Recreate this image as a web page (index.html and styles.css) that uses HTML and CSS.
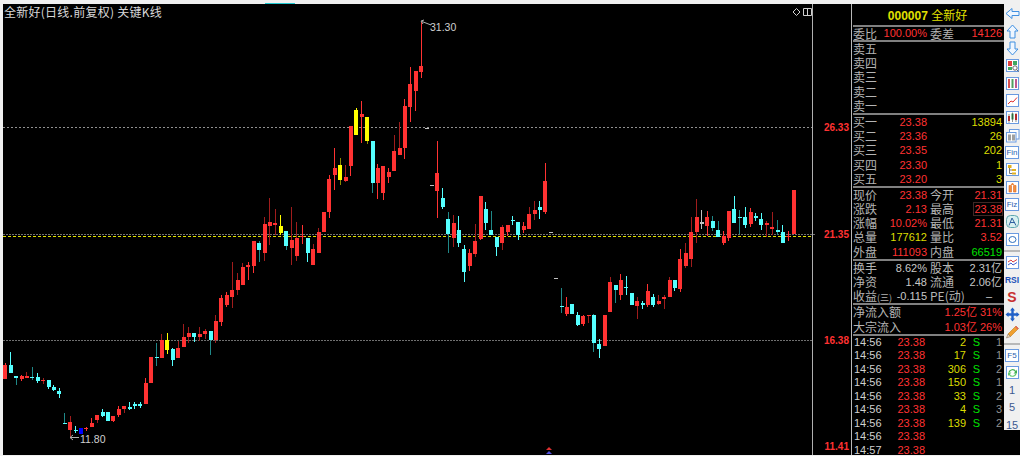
FILE: index.html
```html
<!DOCTYPE html>
<html lang="zh-CN">
<head>
    <meta charset="UTF-8">
    <title>全新好 关键K线</title>
    <link rel="stylesheet" href="styles.css">
</head>
<body>
    <div class="top-strip"><span class="top-tab"></span></div>
    <div class="app">
        <!-- K线图 -->
        <div class="chart">
            <div class="chart-title">全新好(日线.前复权) 关键K线</div>
            <svg class="chart-svg" viewBox="3 4 848 451" width="848" height="451">
                <line class="axis" x1="812.5" y1="4" x2="812.5" y2="455"/>
                <line class="grid-dot" x1="3" y1="127.5" x2="812" y2="127.5"/>
                <line class="grid-dim" x1="3" y1="234.5" x2="816" y2="234.5"/>
                <line class="grid-close" x1="3" y1="236.5" x2="812" y2="236.5"/>
                <line class="grid-dim" x1="3" y1="340.5" x2="812" y2="340.5"/>
                <g id="candles"></g>
                <text class="axis-label" x="849" y="131">26.33</text>
                <text class="axis-label" x="849" y="238">21.35</text>
                <text class="axis-label" x="849" y="344">16.38</text>
                <text class="axis-label" x="849" y="450">11.41</text>
                <path class="pointer" d="M431 25 L422 21.5 M424 20 L421 21 L423 24"/>
                <text class="peak" x="430" y="31">31.30</text>
                <path class="pointer" d="M79 437.5 H70 M73 435 L70 437.5 L73 440"/>
                <text class="peak" x="80" y="443">11.80</text>
                <path class="mark-red" d="M549 447 L552 450 H546 Z"/>
                <path class="mark-blue" d="M549 451 L552 454 H546 Z"/>
                <path class="corner-icon" d="M796.5 8.5 L800 12 L796.5 15.5 L793 12 Z"/>
                <path class="corner-icon" d="M803.5 8.5 H811.5 V15.5 H803.5 Z M807.5 8.5 V15.5"/>
            </svg>
        </div>

        <!-- 盘口 -->
        <div class="quote">
            <div class="quote-head"><b>000007</b> 全新好</div>
            <div class="section row-four ratio-row">
                <span class="lbl">委比</span><span class="num red">100.00%</span>
                <span class="lbl lbl-2">委差</span><span class="num red">14126</span>
            </div>
            <div class="section">
                <div class="row"><span class="lbl">卖五</span></div>
                <div class="row"><span class="lbl">卖四</span></div>
                <div class="row"><span class="lbl">卖三</span></div>
                <div class="row"><span class="lbl">卖二</span></div>
                <div class="row"><span class="lbl">卖一</span></div>
            </div>
            <div class="section">
                <div class="row row-book"><span class="lbl">买一</span><span class="num red">23.38</span><span class="num yellow">13894</span></div>
                <div class="row row-book"><span class="lbl">买二</span><span class="num red">23.36</span><span class="num yellow">26</span></div>
                <div class="row row-book"><span class="lbl">买三</span><span class="num red">23.35</span><span class="num yellow">202</span></div>
                <div class="row row-book"><span class="lbl">买四</span><span class="num red">23.30</span><span class="num yellow">1</span></div>
                <div class="row row-book"><span class="lbl">买五</span><span class="num red">23.20</span><span class="num yellow">3</span></div>
            </div>
            <div class="section">
                <div class="row row-four"><span class="lbl">现价</span><span class="num red">23.38</span><span class="lbl lbl-2">今开</span><span class="num red">21.31</span></div>
                <div class="row row-four"><span class="lbl">涨跌</span><span class="num red">2.13</span><span class="lbl lbl-2">最高</span><span class="num red"><span class="boxed">23.38</span></span></div>
                <div class="row row-four"><span class="lbl">涨幅</span><span class="num red">10.02%</span><span class="lbl lbl-2">最低</span><span class="num red">21.31</span></div>
                <div class="row row-four"><span class="lbl">总量</span><span class="num yellow">177612</span><span class="lbl lbl-2">量比</span><span class="num red">3.52</span></div>
                <div class="row row-four"><span class="lbl">外盘</span><span class="num red">111093</span><span class="lbl lbl-2">内盘</span><span class="num green">66519</span></div>
            </div>
            <div class="section">
                <div class="row row-four"><span class="lbl">换手</span><span class="num">8.62%</span><span class="lbl lbl-2">股本</span><span class="num">2.31亿</span></div>
                <div class="row row-four"><span class="lbl">净资</span><span class="num">1.48</span><span class="lbl lbl-2">流通</span><span class="num">2.06亿</span></div>
                <div class="row row-four"><span class="lbl">收益<small>(三)</small></span><span class="num">-0.115</span><span class="lbl lbl-2">PE(动)</span><span class="num dash">–</span></div>
            </div>
            <div class="section">
                <div class="row row-flow"><span class="lbl">净流入额</span><span class="num red">1.25亿</span><span class="num red">31%</span></div>
                <div class="row row-flow"><span class="lbl">大宗流入</span><span class="num red">1.03亿</span><span class="num red">26%</span></div>
            </div>
            <div class="ticks">
                <div class="tick"><span>14:56</span><span class="num red">23.38</span><span class="num yellow">2</span><span class="side">S</span><span class="num count">1</span></div>
                <div class="tick"><span>14:56</span><span class="num red">23.38</span><span class="num yellow">17</span><span class="side">S</span><span class="num count">1</span></div>
                <div class="tick"><span>14:56</span><span class="num red">23.38</span><span class="num yellow">306</span><span class="side">S</span><span class="num count">2</span></div>
                <div class="tick"><span>14:56</span><span class="num red">23.38</span><span class="num yellow">150</span><span class="side">S</span><span class="num count">1</span></div>
                <div class="tick"><span>14:56</span><span class="num red">23.38</span><span class="num yellow">33</span><span class="side">S</span><span class="num count">2</span></div>
                <div class="tick"><span>14:56</span><span class="num red">23.38</span><span class="num yellow">4</span><span class="side">S</span><span class="num count">3</span></div>
                <div class="tick"><span>14:56</span><span class="num red">23.38</span><span class="num yellow">139</span><span class="side">S</span><span class="num count">2</span></div>
                <div class="tick"><span>14:56</span><span class="num red">23.38</span></div>
                <div class="tick"><span>14:57</span><span class="num red">23.38</span></div>
            </div>
        </div>

        <!-- 工具栏 -->
        <div class="toolbar-wrap">
            <div class="toolbar">
                <div class="tool"><svg viewBox="0 0 15 15"><path class="arrow" d="M1 7.5 L7 2.5 V5.5 H14 V9.5 H7 V12.5 Z"/></svg></div>
                <div class="tool"><svg viewBox="0 0 15 15"><path class="arrow" d="M7.5 1 L13 7 H10 V14 H5 V7 H2 Z"/></svg></div>
                <div class="tool"><svg viewBox="0 0 15 15"><path class="arrow" d="M7.5 14 L13 8 H10 V1 H5 V8 H2 Z"/></svg></div>
                <div class="tool"><svg viewBox="0 0 15 15"><rect class="frame" x="1.5" y="1.5" width="12" height="12"/><rect x="3" y="3" width="4" height="5" fill="#e04040"/><rect x="8" y="3" width="4" height="4" fill="#40a860"/><rect x="3" y="9" width="4" height="3" fill="#40a860"/><circle cx="10" cy="10" r="2.2" fill="#fff" stroke="#666"/><path d="M11.5 11.5 L13.5 13.5" stroke="#666"/></svg></div>
                <div class="tool"><svg viewBox="0 0 15 15"><rect class="frame" x="1.5" y="1.5" width="12" height="12"/><rect x="3" y="3" width="2" height="9" fill="#d85050"/><rect x="6.5" y="3" width="2" height="9" fill="#50a060"/><rect x="10" y="3" width="2" height="9" fill="#c05890"/></svg></div>
                <div class="tool"><svg viewBox="0 0 15 15"><rect class="frame" x="1.5" y="1.5" width="12" height="12"/><path d="M3 11 L6 8 L8 9 L12 4.5" fill="none" stroke="#e03030"/></svg></div>
                <div class="tool"><svg viewBox="0 0 15 15"><rect class="frame" x="1.5" y="1.5" width="12" height="12"/><rect x="3" y="6" width="2" height="5" fill="#e02020"/><rect x="6.5" y="3.5" width="2" height="6" fill="#209040"/><rect x="10" y="4" width="2" height="6" fill="#e02020"/><path d="M4 4 V13 M7.5 2.5 V12 M11 3 V12" stroke="#444" stroke-width=".6"/></svg></div>
                <div class="tool"><svg viewBox="0 0 15 15"><rect class="frame" x="4.5" y="1.5" width="9.5" height="9.5"/><rect class="frame" x="1.5" y="4.5" width="9.5" height="9.5"/><rect x="3" y="6.5" width="3" height="6" fill="#a0a0a0"/><rect x="7" y="6.5" width="3" height="6" fill="#a0a0a0"/></svg></div>
                <div class="tool"><span class="tool-box">Fin</span></div>
                <div class="tool"><svg viewBox="0 0 15 15"><rect class="frame" x="1.5" y="1.5" width="12" height="12"/><rect x="3" y="3" width="3.5" height="3" fill="#e0b020"/><rect x="7" y="7" width="4" height="2" fill="#e0b020"/><rect x="7" y="10.5" width="4" height="2" fill="#e0b020"/><path d="M4.5 6 V11.5 H7 M4.5 8 H7" fill="none" stroke="#777"/></svg></div>
                <div class="tool"><svg viewBox="0 0 15 15"><rect class="frame" x="1.5" y="1.5" width="12" height="12"/><path d="M4 12 V5.5 H6.5 V12 Z M8.5 12 V5.5 H11 V12 Z M6 5 L7.5 3 L9 5" fill="#f09040" stroke="#e06820" stroke-width=".6"/></svg></div>
                <div class="tool"><span class="tool-box">Fiz</span></div>
                <div class="tool"><svg viewBox="0 0 15 15"><rect x="1.5" y="1.5" width="12" height="12" rx="4" fill="#d8f0f0" stroke="#60a8b0"/><path d="M4 11.5 L7 4 L11 11.5 M5 8.5 H10" fill="none" stroke="#3060a0"/></svg></div>
                <div class="tool"><svg viewBox="0 0 15 15"><rect class="frame" x="1.5" y="1.5" width="12" height="12"/><ellipse cx="7.5" cy="7.5" rx="3.5" ry="3" fill="none" stroke="#3070c0"/></svg></div>
                <div class="tool-sep"></div>
                <div class="tool"><svg viewBox="0 0 15 15"><rect class="frame" x="1.5" y="1.5" width="12" height="12"/><path d="M3 7 L6 5 L8 7 L12 4.5" fill="none" stroke="#d84040"/><path d="M3 10 L6 8 L8 10 L12 7.5" fill="none" stroke="#4060d0"/></svg></div>
                <div class="tool"><span class="tool-rsi">RSI</span></div>
                <div class="tool"><span class="tool-dollar">S</span></div>
                <div class="tool"><svg viewBox="0 0 15 15"><path d="M7.5 0.5 L10 3.5 H8.7 V6.3 H11.5 V5 L14.5 7.5 L11.5 10 V8.7 H8.7 V11.5 H10 L7.5 14.5 L5 11.5 H6.3 V8.7 H3.5 V10 L0.5 7.5 L3.5 5 V6.3 H6.3 V3.5 H5 Z" fill="#1f5fc8"/></svg></div>
                <div class="tool"><svg viewBox="0 0 15 15"><path d="M3 10 L11 2 L13.5 4.5 L5.5 12.5 Z" fill="#f0a030" stroke="#c07818" stroke-width=".6"/><path d="M3 10 L1.5 14 L5.5 12.5 Z" fill="#f0d8b0" stroke="#887060" stroke-width=".6"/><path d="M11 2 L13.5 4.5 L12.5 5.5 L10 3 Z" fill="#e06060"/></svg></div>
                <div class="tool-sep"></div>
                <div class="tool"><span class="tool-box">F5</span></div>
                <div class="tool"><svg viewBox="0 0 15 15"><rect class="frame" x="1.5" y="1.5" width="12" height="12"/><path d="M3.5 7 A4 3.5 0 0 1 11 6 L12 4.5 V8.5 H8.5 L10 7 A2.5 2 0 0 0 5 7.5 Z" fill="#40b050"/><path d="M11.5 8.5 A4 3.5 0 0 1 4 10 L3 11 V7.5 H6.5 L5 9 A2.5 2 0 0 0 10 8.5 Z" fill="#60c870"/></svg></div>
                <div class="tool tool-num">1</div>
                <div class="tool tool-num">5</div>
                <div class="tool tool-num">15</div>
            </div>
        </div>
    </div>
    <script src="chart.js"></script>
</body>
</html>
```

FILE: styles.css
```css
* {
    margin: 0;
    padding: 0;
    box-sizing: border-box;
}

body {
    width: 1020px;
    height: 456px;
    overflow: hidden;
    background: #f0f0f0;
    color: #c4c4c4;
    font-family: "Liberation Sans", "Noto Sans CJK SC", sans-serif;
    font-size: 11px;
}

.top-strip {
    height: 4px;
    position: relative;
}

.top-tab {
    position: absolute;
    left: 265px;
    top: 3px;
    width: 30px;
    height: 1px;
    background: #20c8d0;
}

.app {
    display: flex;
    height: 451px;
    padding-left: 3px;
}

/* K线图 */
.chart {
    width: 848px;
    position: relative;
    background: #000;
}

.chart-title {
    position: absolute;
    left: 1px;
    top: 1px;
    color: #d8d8d8;
    font-family: "Noto Sans CJK SC", sans-serif;
    font-size: 12px;
    line-height: 14px;
    letter-spacing: 0.25px;
    white-space: nowrap;
}

.chart-svg {
    display: block;
}

.axis {
    stroke: #b0b0b0;
    stroke-width: 1;
}

.grid-dot {
    stroke: #909090;
    stroke-dasharray: 2 2;
}

.grid-dim {
    stroke: #707070;
    stroke-dasharray: 2 1;
}

.grid-close {
    stroke: #e0e000;
    stroke-dasharray: 3 2;
}

.axis-label {
    fill: #ff3232;
    font-size: 10px;
    font-weight: bold;
    text-anchor: end;
}

.peak {
    fill: #d0d0d0;
    font-size: 10.5px;
}

.pointer {
    fill: none;
    stroke: #b0b0b0;
}

.mark-red {
    fill: #e03030;
}

.mark-blue {
    fill: #5050e0;
}

.corner-icon {
    fill: none;
    stroke: #d0d0d0;
}

/* 盘口 */
.quote {
    width: 153px;
    background: #000;
    border-left: 1px solid #b8b8b8;
    padding: 0 2px 0 1px;
}

.quote-head {
    height: 21px;
    padding-top: 3px;
    color: #e0e000;
    font-size: 12px;
    line-height: 18px;
    text-align: center;
}

.section {
    border-top: 2px solid #808080;
    margin-right: -2px;
    padding-right: 2px;
}

.section.ratio-row {
    height: 15px;
    line-height: 13px;
}

.row {
    height: 14.2px;
    line-height: 14.2px;
    white-space: nowrap;
}

.row-four {
    display: grid;
    grid-template-columns: 24px 50px 27px 1fr;
}

.row-book {
    display: grid;
    grid-template-columns: 24px 50px 1fr;
}

.row-flow {
    display: grid;
    grid-template-columns: 60px 64px 1fr;
}

.lbl {
    display: block;
    font-family: "Noto Sans CJK SC", sans-serif;
    font-size: 12px;
    color: #b4b4b4;
    white-space: nowrap;
}

.lbl small {
    font-size: 9px;
}

.lbl-2 {
    padding-left: 3px;
}

.num {
    text-align: right;
    color: #c8c8c8;
    white-space: nowrap;
}

.red {
    color: #ff3232;
}

.yellow {
    color: #dcdc00;
}

.green {
    color: #00e000;
}

.dash {
    padding-right: 10px;
}

.boxed {
    outline: 1px solid #402825;
}

.ticks {
    border-top: 2px solid #808080;
    margin-right: -2px;
    padding-right: 2px;
}

.tick {
    display: grid;
    grid-template-columns: 30px 41px 41px 14px 1fr;
    height: 13.5px;
    line-height: 13px;
    padding-left: 1px;
    color: #d0d0d0;
}

.side {
    color: #00e000;
    text-align: right;
}

.count {
    color: #909090;
}

/* 工具栏 */
.toolbar-wrap {
    width: 16px;
    background: #000;
}

.toolbar {
    height: 426px;
    padding-top: 1px;
    background: #f0f0f0;
}

.tool {
    height: 17.35px;
    display: flex;
    align-items: center;
    justify-content: center;
}

.tool svg {
    width: 15px;
    height: 15px;
    display: block;
}

.arrow {
    fill: #eef6ff;
    stroke: #3f8fe0;
}

.frame {
    fill: #fff;
    stroke: #6a9ae0;
}

.tool-box {
    width: 14px;
    height: 13px;
    border: 1px solid #6a9ae0;
    background: #fff;
    color: #2a62b0;
    font-size: 8px;
    line-height: 11px;
    text-align: center;
}

.tool-rsi {
    color: #2050b8;
    font-size: 8.5px;
    font-weight: bold;
}

.tool-dollar {
    color: #c83030;
    font-size: 14px;
    font-weight: bold;
    line-height: 16px;
}

.tool-sep {
    height: 2px;
    margin: 2px 0 2px;
    background: #b8b8b8;
}

.tool-num {
    color: #3c5a90;
    font-size: 11px;
}
```

FILE: chart.js
```js
// 每根K线: [最高, 实体上沿, 实体下沿, 最低, 类型]
// r 红 c 青 y 黄 b 蓝 w 白, 大写表示上下影线偏暗
const bars = [
    [363,365,379,379,'r'],[352,365,373,373,'c'],[376,376,378,385,'C'],[375,376,379,381,'r'],
    [372,376,378,378,'R'],[367,377,378,380,'C'],[373,377,381,383,'c'],[378,380,381,384,'R'],
    [380,380,387,389,'c'],[385,387,390,391,'c'],[388,391,394,398,'c'],[413,423,424,424,'C'],
    [416,422,430,437,'R'],[426,430,431,433,'c'],[428,428,434,434,'b'],[427,428,429,431,'r'],
    [418,423,427,427,'r'],[415,415,420,423,'R'],[409,412,416,417,'c'],[412,412,421,421,'c'],
    [416,416,421,422,'r'],[406,409,415,417,'r'],[406,406,409,413,'R'],[402,407,409,410,'c'],
    [402,404,406,409,'c'],[402,404,406,408,'c'],[378,383,404,404,'r'],[357,357,383,383,'r'],
    [343,357,358,366,'C'],[334,340,358,358,'R'],[333,340,350,354,'y'],[348,349,360,366,'c'],
    [341,348,358,358,'R'],[324,337,347,347,'R'],[327,333,337,343,'R'],[333,333,337,342,'c'],
    [327,334,337,341,'R'],[329,331,334,339,'R'],[331,331,340,355,'C'],[315,321,340,343,'R'],
    [295,298,322,326,'r'],[292,295,305,307,'r'],[262,290,297,308,'R'],[273,280,290,295,'R'],
    [263,267,285,285,'R'],[262,265,267,280,'r'],[241,241,266,273,'r'],[241,243,250,262,'C'],
    [217,224,253,261,'R'],[198,222,226,245,'R'],[209,223,225,235,'R'],[215,226,233,235,'y'],
    [231,231,246,250,'C'],[207,240,248,265,'R'],[222,238,256,261,'R'],[225,236,237,244,'r'],
    [238,238,253,262,'c'],[244,249,265,265,'R'],[228,232,253,253,'R'],[212,212,232,232,'r'],
    [175,179,212,218,'r'],[148,168,175,190,'r'],[158,165,180,185,'Y'],[165,177,181,182,'R'],
    [126,126,166,176,'r'],[108,110,135,135,'y'],[101,114,117,143,'r'],[117,117,141,144,'Y'],
    [141,141,183,193,'C'],[164,168,183,199,'r'],[166,166,193,200,'r'],[168,172,177,183,'r'],
    [135,151,171,171,'R'],[122,148,155,155,'R'],[99,106,148,159,'r'],[67,84,107,122,'r'],
    [71,71,91,111,'r'],[22,66,72,78,'r'],[128,128,129,129,'w'],[185,185,186,186,'w'],
    [141,173,191,218,'r'],[188,198,207,209,'c'],[212,219,234,253,'C'],[215,223,238,247,'R'],
    [216,230,243,247,'c'],[245,249,272,282,'c'],[249,253,266,271,'r'],[224,241,254,257,'R'],
    [196,196,239,240,'r'],[202,209,223,230,'c'],[211,230,235,235,'C'],[237,237,247,256,'c'],
    [225,227,243,250,'R'],[225,225,232,236,'r'],[216,220,221,225,'c'],[222,222,235,240,'c'],
    [222,226,230,233,'r'],[207,214,229,229,'R'],[201,210,214,220,'R'],[201,207,210,219,'c'],
    [163,181,212,214,'r'],[232,232,233,233,'w'],[278,278,279,279,'w'],[288,306,307,313,'C'],
    [297,307,314,316,'r'],[304,304,314,314,'c'],[312,315,325,326,'c'],[315,316,324,326,'r'],
    [315,315,316,323,'R'],[314,315,343,352,'C'],[339,344,349,358,'c'],[315,315,346,346,'r'],
    [277,282,312,312,'R'],[285,285,290,303,'C'],[274,280,295,300,'r'],[276,287,288,295,'c'],
    [293,293,305,305,'c'],[297,301,306,319,'R'],[301,303,305,309,'c'],[284,291,305,307,'r'],
    [294,297,305,307,'c'],[295,301,304,305,'R'],[295,297,299,309,'R'],[277,280,297,297,'R'],
    [280,280,288,291,'c'],[249,259,289,292,'r'],[243,253,266,268,'R'],[217,232,259,267,'R'],
    [199,217,232,243,'R'],[210,222,224,229,'w'],[211,217,226,236,'r'],[216,221,228,231,'C'],
    [221,230,237,237,'C'],[231,236,243,245,'r'],[211,211,238,241,'r'],[196,209,223,223,'c'],
    [210,217,218,234,'C'],[207,217,225,228,'c'],[208,212,224,227,'r'],[213,216,218,221,'c'],
    [213,219,225,230,'c'],[221,223,225,237,'R'],[212,227,229,235,'R'],[220,230,232,235,'C'],
    [225,232,243,243,'c'],[231,236,237,241,'r'],[190,190,234,234,'r']
];

const bodyColor = { r: '#ff3232', c: '#55ffff', y: '#ffff00', b: '#0000ff', w: '#c0c0c0' };
const dimColor = { r: '#a01c1c', c: '#1f8888', y: '#8a8a00' };

const group = document.getElementById('candles');

function addRect(x, y, w, h, fill) {
    const rect = document.createElementNS('http://www.w3.org/2000/svg', 'rect');
    rect.setAttribute('x', x);
    rect.setAttribute('y', y);
    rect.setAttribute('width', w);
    rect.setAttribute('height', Math.max(h, 1));
    rect.setAttribute('fill', fill);
    group.appendChild(rect);
}

bars.forEach(([hi, top, bot, lo, type], i) => {
    const cx = 5.3 + 5.4 * i;
    const key = type.toLowerCase();
    const wick = type !== key ? dimColor[key] : bodyColor[key];
    if (lo > hi) addRect(Math.round(cx - 0.5), hi, 1, lo - hi, wick);
    addRect(Math.round(cx - 2), top, 4, bot - top, bodyColor[key]);
});
```
